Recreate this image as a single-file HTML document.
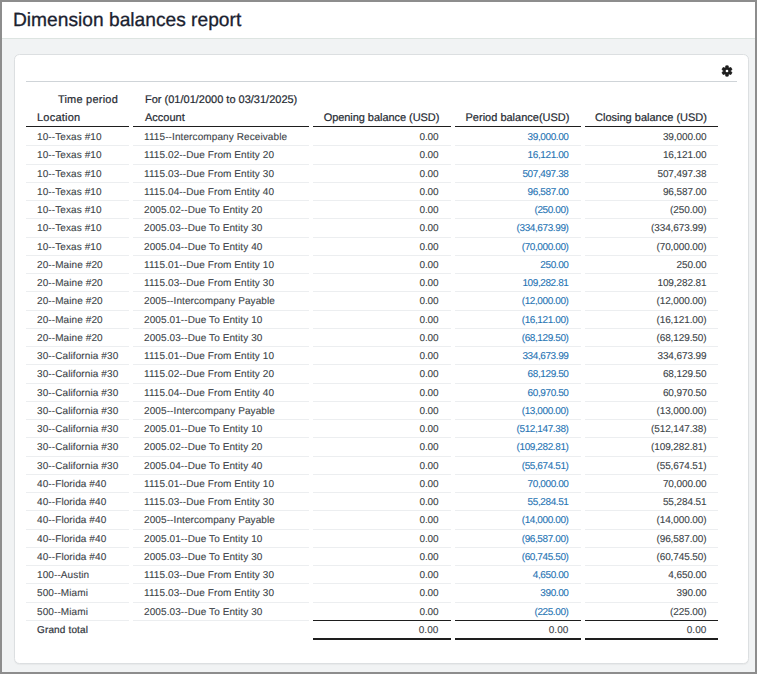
<!DOCTYPE html><html><head><meta charset="utf-8"><style>
*{margin:0;padding:0;box-sizing:border-box}
html,body{width:757px;height:674px;overflow:hidden;background:#8d8d8d;font-family:"Liberation Sans",sans-serif;text-rendering:geometricPrecision}
#frame{position:absolute;left:2px;top:2px;width:753px;height:670px;background:#f1f3f4;overflow:hidden}
#hdr{position:absolute;left:0;top:0;width:753px;height:37px;background:#fff;border-bottom:1px solid #dde4e1}
#title{position:absolute;left:11px;top:7.5px;font-size:19.2px;color:#1b2230;white-space:nowrap;-webkit-text-stroke:0.3px #1b2230}
#card{position:absolute;left:11.6px;top:52px;width:735.4px;height:610px;background:#fff;border:1px solid #dcdfe1;border-radius:5.5px;box-shadow:0 1px 1px rgba(0,0,0,0.04)}
.t{position:absolute;white-space:nowrap}
.h{font-size:11px;color:#262b33;-webkit-text-stroke:0.2px #262b33;letter-spacing:0px}
.b{font-size:10px;color:#3a3f46;-webkit-text-stroke:0.1px #3a3f46;letter-spacing:0.1px}
.n{letter-spacing:-0.1px}
.bl{letter-spacing:-0.4px;color:#2573b3;-webkit-text-stroke:0.1px #2573b3}
.g{-webkit-text-stroke:0.2px #3a3f46;color:#2c3038;letter-spacing:0.15px}
.r{text-align:right}
i{font-style:normal}
.po{margin-right:0px}
.pc{margin-left:0px}
.c{text-align:center}
.sep{position:absolute;height:1px;background:#eceef0}
.dk{position:absolute;background:#1e1e1e}
</style></head><body>
<div id="frame"><div id="hdr"><div id="title">Dimension balances report</div></div><div id="card"></div></div>
<div class="sep" style="left:26px;top:81px;width:711px;background:#cfd4d8"></div>
<svg style='position:absolute;left:721.3px;top:64.5px' width='12' height='12' viewBox='0 0 12 12'><path d='M4.42,2.76 L4.81,0.84 L7.19,0.84 L7.58,2.76 L8.01,3.02 L9.88,2.39 L11.07,4.45 L9.59,5.75 L9.59,6.25 L11.07,7.55 L9.88,9.61 L8.01,8.98 L7.58,9.24 L7.19,11.16 L4.81,11.16 L4.42,9.24 L3.99,8.98 L2.12,9.61 L0.93,7.55 L2.41,6.25 L2.41,5.75 L0.93,4.45 L2.12,2.39 L3.99,3.02Z' fill='#1e1e1e' stroke='#1e1e1e' stroke-width='0.7' stroke-linejoin='round'/><circle cx='6' cy='6' r='1.35' fill='#fff'/></svg>
<div class="t h r" style="left:-82px;width:200px;top:94px;letter-spacing:0.22px">Time period</div>
<div class="t h" style="left:145px;top:94px">For (01/01/2000 to 03/31/2025)</div>
<div class="t h" style="left:37px;top:112px;letter-spacing:0.22px">Location</div>
<div class="t h" style="left:145px;top:112px">Account</div>
<div class="t h c" style="left:312.5px;width:138.0px;top:112px;letter-spacing:-0.05px">Opening balance (USD)</div>
<div class="t h c" style="left:454.5px;width:126.0px;top:112px;letter-spacing:0px">Period balance(USD)</div>
<div class="t h c" style="left:584.5px;width:133.0px;top:112px;letter-spacing:0px">Closing balance (USD)</div>
<div class="dk" style="left:26px;width:103px;top:126px;height:1px"></div>
<div class="dk" style="left:133px;width:175.5px;top:126px;height:1px"></div>
<div class="dk" style="left:312.5px;width:138.0px;top:126px;height:1px"></div>
<div class="dk" style="left:454.5px;width:126.0px;top:126px;height:1px"></div>
<div class="dk" style="left:584.5px;width:133.0px;top:126px;height:1px"></div>
<div class="t b" style="left:37px;top:132.0px">10--Texas #10</div>
<div class="sep" style="left:26px;width:103px;top:145.25px"></div>
<div class="t b" style="left:144px;top:132.0px">1115--Intercompany Receivable</div>
<div class="sep" style="left:133px;width:175.5px;top:145.25px"></div>
<div class="t b r n" style="left:312.5px;width:126.0px;top:132.0px">0.00</div>
<div class="sep" style="left:312.5px;width:138.0px;top:145.25px"></div>
<div class="t b r n bl" style="left:454.5px;width:114.0px;top:132.0px">39,000.00</div>
<div class="sep" style="left:454.5px;width:126.0px;top:145.25px"></div>
<div class="t b r n" style="left:584.5px;width:122.0px;top:132.0px">39,000.00</div>
<div class="sep" style="left:584.5px;width:133.0px;top:145.25px"></div>
<div class="t b" style="left:37px;top:150.25px">10--Texas #10</div>
<div class="sep" style="left:26px;width:103px;top:163.5px"></div>
<div class="t b" style="left:144px;top:150.25px">1115.02--Due From Entity 20</div>
<div class="sep" style="left:133px;width:175.5px;top:163.5px"></div>
<div class="t b r n" style="left:312.5px;width:126.0px;top:150.25px">0.00</div>
<div class="sep" style="left:312.5px;width:138.0px;top:163.5px"></div>
<div class="t b r n bl" style="left:454.5px;width:114.0px;top:150.25px">16,121.00</div>
<div class="sep" style="left:454.5px;width:126.0px;top:163.5px"></div>
<div class="t b r n" style="left:584.5px;width:122.0px;top:150.25px">16,121.00</div>
<div class="sep" style="left:584.5px;width:133.0px;top:163.5px"></div>
<div class="t b" style="left:37px;top:168.5px">10--Texas #10</div>
<div class="sep" style="left:26px;width:103px;top:181.75px"></div>
<div class="t b" style="left:144px;top:168.5px">1115.03--Due From Entity 30</div>
<div class="sep" style="left:133px;width:175.5px;top:181.75px"></div>
<div class="t b r n" style="left:312.5px;width:126.0px;top:168.5px">0.00</div>
<div class="sep" style="left:312.5px;width:138.0px;top:181.75px"></div>
<div class="t b r n bl" style="left:454.5px;width:114.0px;top:168.5px">507,497.38</div>
<div class="sep" style="left:454.5px;width:126.0px;top:181.75px"></div>
<div class="t b r n" style="left:584.5px;width:122.0px;top:168.5px">507,497.38</div>
<div class="sep" style="left:584.5px;width:133.0px;top:181.75px"></div>
<div class="t b" style="left:37px;top:186.75px">10--Texas #10</div>
<div class="sep" style="left:26px;width:103px;top:200.0px"></div>
<div class="t b" style="left:144px;top:186.75px">1115.04--Due From Entity 40</div>
<div class="sep" style="left:133px;width:175.5px;top:200.0px"></div>
<div class="t b r n" style="left:312.5px;width:126.0px;top:186.75px">0.00</div>
<div class="sep" style="left:312.5px;width:138.0px;top:200.0px"></div>
<div class="t b r n bl" style="left:454.5px;width:114.0px;top:186.75px">96,587.00</div>
<div class="sep" style="left:454.5px;width:126.0px;top:200.0px"></div>
<div class="t b r n" style="left:584.5px;width:122.0px;top:186.75px">96,587.00</div>
<div class="sep" style="left:584.5px;width:133.0px;top:200.0px"></div>
<div class="t b" style="left:37px;top:205.0px">10--Texas #10</div>
<div class="sep" style="left:26px;width:103px;top:218.25px"></div>
<div class="t b" style="left:144px;top:205.0px">2005.02--Due To Entity 20</div>
<div class="sep" style="left:133px;width:175.5px;top:218.25px"></div>
<div class="t b r n" style="left:312.5px;width:126.0px;top:205.0px">0.00</div>
<div class="sep" style="left:312.5px;width:138.0px;top:218.25px"></div>
<div class="t b r n bl" style="left:454.5px;width:114.0px;top:205.0px"><i class="po">(</i>250.00<i class="pc">)</i></div>
<div class="sep" style="left:454.5px;width:126.0px;top:218.25px"></div>
<div class="t b r n" style="left:584.5px;width:122.0px;top:205.0px"><i class="po">(</i>250.00<i class="pc">)</i></div>
<div class="sep" style="left:584.5px;width:133.0px;top:218.25px"></div>
<div class="t b" style="left:37px;top:223.25px">10--Texas #10</div>
<div class="sep" style="left:26px;width:103px;top:236.5px"></div>
<div class="t b" style="left:144px;top:223.25px">2005.03--Due To Entity 30</div>
<div class="sep" style="left:133px;width:175.5px;top:236.5px"></div>
<div class="t b r n" style="left:312.5px;width:126.0px;top:223.25px">0.00</div>
<div class="sep" style="left:312.5px;width:138.0px;top:236.5px"></div>
<div class="t b r n bl" style="left:454.5px;width:114.0px;top:223.25px"><i class="po">(</i>334,673.99<i class="pc">)</i></div>
<div class="sep" style="left:454.5px;width:126.0px;top:236.5px"></div>
<div class="t b r n" style="left:584.5px;width:122.0px;top:223.25px"><i class="po">(</i>334,673.99<i class="pc">)</i></div>
<div class="sep" style="left:584.5px;width:133.0px;top:236.5px"></div>
<div class="t b" style="left:37px;top:241.5px">10--Texas #10</div>
<div class="sep" style="left:26px;width:103px;top:254.75px"></div>
<div class="t b" style="left:144px;top:241.5px">2005.04--Due To Entity 40</div>
<div class="sep" style="left:133px;width:175.5px;top:254.75px"></div>
<div class="t b r n" style="left:312.5px;width:126.0px;top:241.5px">0.00</div>
<div class="sep" style="left:312.5px;width:138.0px;top:254.75px"></div>
<div class="t b r n bl" style="left:454.5px;width:114.0px;top:241.5px"><i class="po">(</i>70,000.00<i class="pc">)</i></div>
<div class="sep" style="left:454.5px;width:126.0px;top:254.75px"></div>
<div class="t b r n" style="left:584.5px;width:122.0px;top:241.5px"><i class="po">(</i>70,000.00<i class="pc">)</i></div>
<div class="sep" style="left:584.5px;width:133.0px;top:254.75px"></div>
<div class="t b" style="left:37px;top:259.75px">20--Maine #20</div>
<div class="sep" style="left:26px;width:103px;top:273.0px"></div>
<div class="t b" style="left:144px;top:259.75px">1115.01--Due From Entity 10</div>
<div class="sep" style="left:133px;width:175.5px;top:273.0px"></div>
<div class="t b r n" style="left:312.5px;width:126.0px;top:259.75px">0.00</div>
<div class="sep" style="left:312.5px;width:138.0px;top:273.0px"></div>
<div class="t b r n bl" style="left:454.5px;width:114.0px;top:259.75px">250.00</div>
<div class="sep" style="left:454.5px;width:126.0px;top:273.0px"></div>
<div class="t b r n" style="left:584.5px;width:122.0px;top:259.75px">250.00</div>
<div class="sep" style="left:584.5px;width:133.0px;top:273.0px"></div>
<div class="t b" style="left:37px;top:278.0px">20--Maine #20</div>
<div class="sep" style="left:26px;width:103px;top:291.25px"></div>
<div class="t b" style="left:144px;top:278.0px">1115.03--Due From Entity 30</div>
<div class="sep" style="left:133px;width:175.5px;top:291.25px"></div>
<div class="t b r n" style="left:312.5px;width:126.0px;top:278.0px">0.00</div>
<div class="sep" style="left:312.5px;width:138.0px;top:291.25px"></div>
<div class="t b r n bl" style="left:454.5px;width:114.0px;top:278.0px">109,282.81</div>
<div class="sep" style="left:454.5px;width:126.0px;top:291.25px"></div>
<div class="t b r n" style="left:584.5px;width:122.0px;top:278.0px">109,282.81</div>
<div class="sep" style="left:584.5px;width:133.0px;top:291.25px"></div>
<div class="t b" style="left:37px;top:296.25px">20--Maine #20</div>
<div class="sep" style="left:26px;width:103px;top:309.5px"></div>
<div class="t b" style="left:144px;top:296.25px">2005--Intercompany Payable</div>
<div class="sep" style="left:133px;width:175.5px;top:309.5px"></div>
<div class="t b r n" style="left:312.5px;width:126.0px;top:296.25px">0.00</div>
<div class="sep" style="left:312.5px;width:138.0px;top:309.5px"></div>
<div class="t b r n bl" style="left:454.5px;width:114.0px;top:296.25px"><i class="po">(</i>12,000.00<i class="pc">)</i></div>
<div class="sep" style="left:454.5px;width:126.0px;top:309.5px"></div>
<div class="t b r n" style="left:584.5px;width:122.0px;top:296.25px"><i class="po">(</i>12,000.00<i class="pc">)</i></div>
<div class="sep" style="left:584.5px;width:133.0px;top:309.5px"></div>
<div class="t b" style="left:37px;top:314.5px">20--Maine #20</div>
<div class="sep" style="left:26px;width:103px;top:327.75px"></div>
<div class="t b" style="left:144px;top:314.5px">2005.01--Due To Entity 10</div>
<div class="sep" style="left:133px;width:175.5px;top:327.75px"></div>
<div class="t b r n" style="left:312.5px;width:126.0px;top:314.5px">0.00</div>
<div class="sep" style="left:312.5px;width:138.0px;top:327.75px"></div>
<div class="t b r n bl" style="left:454.5px;width:114.0px;top:314.5px"><i class="po">(</i>16,121.00<i class="pc">)</i></div>
<div class="sep" style="left:454.5px;width:126.0px;top:327.75px"></div>
<div class="t b r n" style="left:584.5px;width:122.0px;top:314.5px"><i class="po">(</i>16,121.00<i class="pc">)</i></div>
<div class="sep" style="left:584.5px;width:133.0px;top:327.75px"></div>
<div class="t b" style="left:37px;top:332.75px">20--Maine #20</div>
<div class="sep" style="left:26px;width:103px;top:346.0px"></div>
<div class="t b" style="left:144px;top:332.75px">2005.03--Due To Entity 30</div>
<div class="sep" style="left:133px;width:175.5px;top:346.0px"></div>
<div class="t b r n" style="left:312.5px;width:126.0px;top:332.75px">0.00</div>
<div class="sep" style="left:312.5px;width:138.0px;top:346.0px"></div>
<div class="t b r n bl" style="left:454.5px;width:114.0px;top:332.75px"><i class="po">(</i>68,129.50<i class="pc">)</i></div>
<div class="sep" style="left:454.5px;width:126.0px;top:346.0px"></div>
<div class="t b r n" style="left:584.5px;width:122.0px;top:332.75px"><i class="po">(</i>68,129.50<i class="pc">)</i></div>
<div class="sep" style="left:584.5px;width:133.0px;top:346.0px"></div>
<div class="t b" style="left:37px;top:351.0px">30--California #30</div>
<div class="sep" style="left:26px;width:103px;top:364.25px"></div>
<div class="t b" style="left:144px;top:351.0px">1115.01--Due From Entity 10</div>
<div class="sep" style="left:133px;width:175.5px;top:364.25px"></div>
<div class="t b r n" style="left:312.5px;width:126.0px;top:351.0px">0.00</div>
<div class="sep" style="left:312.5px;width:138.0px;top:364.25px"></div>
<div class="t b r n bl" style="left:454.5px;width:114.0px;top:351.0px">334,673.99</div>
<div class="sep" style="left:454.5px;width:126.0px;top:364.25px"></div>
<div class="t b r n" style="left:584.5px;width:122.0px;top:351.0px">334,673.99</div>
<div class="sep" style="left:584.5px;width:133.0px;top:364.25px"></div>
<div class="t b" style="left:37px;top:369.25px">30--California #30</div>
<div class="sep" style="left:26px;width:103px;top:382.5px"></div>
<div class="t b" style="left:144px;top:369.25px">1115.02--Due From Entity 20</div>
<div class="sep" style="left:133px;width:175.5px;top:382.5px"></div>
<div class="t b r n" style="left:312.5px;width:126.0px;top:369.25px">0.00</div>
<div class="sep" style="left:312.5px;width:138.0px;top:382.5px"></div>
<div class="t b r n bl" style="left:454.5px;width:114.0px;top:369.25px">68,129.50</div>
<div class="sep" style="left:454.5px;width:126.0px;top:382.5px"></div>
<div class="t b r n" style="left:584.5px;width:122.0px;top:369.25px">68,129.50</div>
<div class="sep" style="left:584.5px;width:133.0px;top:382.5px"></div>
<div class="t b" style="left:37px;top:387.5px">30--California #30</div>
<div class="sep" style="left:26px;width:103px;top:400.75px"></div>
<div class="t b" style="left:144px;top:387.5px">1115.04--Due From Entity 40</div>
<div class="sep" style="left:133px;width:175.5px;top:400.75px"></div>
<div class="t b r n" style="left:312.5px;width:126.0px;top:387.5px">0.00</div>
<div class="sep" style="left:312.5px;width:138.0px;top:400.75px"></div>
<div class="t b r n bl" style="left:454.5px;width:114.0px;top:387.5px">60,970.50</div>
<div class="sep" style="left:454.5px;width:126.0px;top:400.75px"></div>
<div class="t b r n" style="left:584.5px;width:122.0px;top:387.5px">60,970.50</div>
<div class="sep" style="left:584.5px;width:133.0px;top:400.75px"></div>
<div class="t b" style="left:37px;top:405.75px">30--California #30</div>
<div class="sep" style="left:26px;width:103px;top:419.0px"></div>
<div class="t b" style="left:144px;top:405.75px">2005--Intercompany Payable</div>
<div class="sep" style="left:133px;width:175.5px;top:419.0px"></div>
<div class="t b r n" style="left:312.5px;width:126.0px;top:405.75px">0.00</div>
<div class="sep" style="left:312.5px;width:138.0px;top:419.0px"></div>
<div class="t b r n bl" style="left:454.5px;width:114.0px;top:405.75px"><i class="po">(</i>13,000.00<i class="pc">)</i></div>
<div class="sep" style="left:454.5px;width:126.0px;top:419.0px"></div>
<div class="t b r n" style="left:584.5px;width:122.0px;top:405.75px"><i class="po">(</i>13,000.00<i class="pc">)</i></div>
<div class="sep" style="left:584.5px;width:133.0px;top:419.0px"></div>
<div class="t b" style="left:37px;top:424.0px">30--California #30</div>
<div class="sep" style="left:26px;width:103px;top:437.25px"></div>
<div class="t b" style="left:144px;top:424.0px">2005.01--Due To Entity 10</div>
<div class="sep" style="left:133px;width:175.5px;top:437.25px"></div>
<div class="t b r n" style="left:312.5px;width:126.0px;top:424.0px">0.00</div>
<div class="sep" style="left:312.5px;width:138.0px;top:437.25px"></div>
<div class="t b r n bl" style="left:454.5px;width:114.0px;top:424.0px"><i class="po">(</i>512,147.38<i class="pc">)</i></div>
<div class="sep" style="left:454.5px;width:126.0px;top:437.25px"></div>
<div class="t b r n" style="left:584.5px;width:122.0px;top:424.0px"><i class="po">(</i>512,147.38<i class="pc">)</i></div>
<div class="sep" style="left:584.5px;width:133.0px;top:437.25px"></div>
<div class="t b" style="left:37px;top:442.25px">30--California #30</div>
<div class="sep" style="left:26px;width:103px;top:455.5px"></div>
<div class="t b" style="left:144px;top:442.25px">2005.02--Due To Entity 20</div>
<div class="sep" style="left:133px;width:175.5px;top:455.5px"></div>
<div class="t b r n" style="left:312.5px;width:126.0px;top:442.25px">0.00</div>
<div class="sep" style="left:312.5px;width:138.0px;top:455.5px"></div>
<div class="t b r n bl" style="left:454.5px;width:114.0px;top:442.25px"><i class="po">(</i>109,282.81<i class="pc">)</i></div>
<div class="sep" style="left:454.5px;width:126.0px;top:455.5px"></div>
<div class="t b r n" style="left:584.5px;width:122.0px;top:442.25px"><i class="po">(</i>109,282.81<i class="pc">)</i></div>
<div class="sep" style="left:584.5px;width:133.0px;top:455.5px"></div>
<div class="t b" style="left:37px;top:460.5px">30--California #30</div>
<div class="sep" style="left:26px;width:103px;top:473.75px"></div>
<div class="t b" style="left:144px;top:460.5px">2005.04--Due To Entity 40</div>
<div class="sep" style="left:133px;width:175.5px;top:473.75px"></div>
<div class="t b r n" style="left:312.5px;width:126.0px;top:460.5px">0.00</div>
<div class="sep" style="left:312.5px;width:138.0px;top:473.75px"></div>
<div class="t b r n bl" style="left:454.5px;width:114.0px;top:460.5px"><i class="po">(</i>55,674.51<i class="pc">)</i></div>
<div class="sep" style="left:454.5px;width:126.0px;top:473.75px"></div>
<div class="t b r n" style="left:584.5px;width:122.0px;top:460.5px"><i class="po">(</i>55,674.51<i class="pc">)</i></div>
<div class="sep" style="left:584.5px;width:133.0px;top:473.75px"></div>
<div class="t b" style="left:37px;top:478.75px">40--Florida #40</div>
<div class="sep" style="left:26px;width:103px;top:492.0px"></div>
<div class="t b" style="left:144px;top:478.75px">1115.01--Due From Entity 10</div>
<div class="sep" style="left:133px;width:175.5px;top:492.0px"></div>
<div class="t b r n" style="left:312.5px;width:126.0px;top:478.75px">0.00</div>
<div class="sep" style="left:312.5px;width:138.0px;top:492.0px"></div>
<div class="t b r n bl" style="left:454.5px;width:114.0px;top:478.75px">70,000.00</div>
<div class="sep" style="left:454.5px;width:126.0px;top:492.0px"></div>
<div class="t b r n" style="left:584.5px;width:122.0px;top:478.75px">70,000.00</div>
<div class="sep" style="left:584.5px;width:133.0px;top:492.0px"></div>
<div class="t b" style="left:37px;top:497.0px">40--Florida #40</div>
<div class="sep" style="left:26px;width:103px;top:510.25px"></div>
<div class="t b" style="left:144px;top:497.0px">1115.03--Due From Entity 30</div>
<div class="sep" style="left:133px;width:175.5px;top:510.25px"></div>
<div class="t b r n" style="left:312.5px;width:126.0px;top:497.0px">0.00</div>
<div class="sep" style="left:312.5px;width:138.0px;top:510.25px"></div>
<div class="t b r n bl" style="left:454.5px;width:114.0px;top:497.0px">55,284.51</div>
<div class="sep" style="left:454.5px;width:126.0px;top:510.25px"></div>
<div class="t b r n" style="left:584.5px;width:122.0px;top:497.0px">55,284.51</div>
<div class="sep" style="left:584.5px;width:133.0px;top:510.25px"></div>
<div class="t b" style="left:37px;top:515.25px">40--Florida #40</div>
<div class="sep" style="left:26px;width:103px;top:528.5px"></div>
<div class="t b" style="left:144px;top:515.25px">2005--Intercompany Payable</div>
<div class="sep" style="left:133px;width:175.5px;top:528.5px"></div>
<div class="t b r n" style="left:312.5px;width:126.0px;top:515.25px">0.00</div>
<div class="sep" style="left:312.5px;width:138.0px;top:528.5px"></div>
<div class="t b r n bl" style="left:454.5px;width:114.0px;top:515.25px"><i class="po">(</i>14,000.00<i class="pc">)</i></div>
<div class="sep" style="left:454.5px;width:126.0px;top:528.5px"></div>
<div class="t b r n" style="left:584.5px;width:122.0px;top:515.25px"><i class="po">(</i>14,000.00<i class="pc">)</i></div>
<div class="sep" style="left:584.5px;width:133.0px;top:528.5px"></div>
<div class="t b" style="left:37px;top:533.5px">40--Florida #40</div>
<div class="sep" style="left:26px;width:103px;top:546.75px"></div>
<div class="t b" style="left:144px;top:533.5px">2005.01--Due To Entity 10</div>
<div class="sep" style="left:133px;width:175.5px;top:546.75px"></div>
<div class="t b r n" style="left:312.5px;width:126.0px;top:533.5px">0.00</div>
<div class="sep" style="left:312.5px;width:138.0px;top:546.75px"></div>
<div class="t b r n bl" style="left:454.5px;width:114.0px;top:533.5px"><i class="po">(</i>96,587.00<i class="pc">)</i></div>
<div class="sep" style="left:454.5px;width:126.0px;top:546.75px"></div>
<div class="t b r n" style="left:584.5px;width:122.0px;top:533.5px"><i class="po">(</i>96,587.00<i class="pc">)</i></div>
<div class="sep" style="left:584.5px;width:133.0px;top:546.75px"></div>
<div class="t b" style="left:37px;top:551.75px">40--Florida #40</div>
<div class="sep" style="left:26px;width:103px;top:565.0px"></div>
<div class="t b" style="left:144px;top:551.75px">2005.03--Due To Entity 30</div>
<div class="sep" style="left:133px;width:175.5px;top:565.0px"></div>
<div class="t b r n" style="left:312.5px;width:126.0px;top:551.75px">0.00</div>
<div class="sep" style="left:312.5px;width:138.0px;top:565.0px"></div>
<div class="t b r n bl" style="left:454.5px;width:114.0px;top:551.75px"><i class="po">(</i>60,745.50<i class="pc">)</i></div>
<div class="sep" style="left:454.5px;width:126.0px;top:565.0px"></div>
<div class="t b r n" style="left:584.5px;width:122.0px;top:551.75px"><i class="po">(</i>60,745.50<i class="pc">)</i></div>
<div class="sep" style="left:584.5px;width:133.0px;top:565.0px"></div>
<div class="t b" style="left:37px;top:570.0px">100--Austin</div>
<div class="sep" style="left:26px;width:103px;top:583.25px"></div>
<div class="t b" style="left:144px;top:570.0px">1115.03--Due From Entity 30</div>
<div class="sep" style="left:133px;width:175.5px;top:583.25px"></div>
<div class="t b r n" style="left:312.5px;width:126.0px;top:570.0px">0.00</div>
<div class="sep" style="left:312.5px;width:138.0px;top:583.25px"></div>
<div class="t b r n bl" style="left:454.5px;width:114.0px;top:570.0px">4,650.00</div>
<div class="sep" style="left:454.5px;width:126.0px;top:583.25px"></div>
<div class="t b r n" style="left:584.5px;width:122.0px;top:570.0px">4,650.00</div>
<div class="sep" style="left:584.5px;width:133.0px;top:583.25px"></div>
<div class="t b" style="left:37px;top:588.25px">500--Miami</div>
<div class="sep" style="left:26px;width:103px;top:601.5px"></div>
<div class="t b" style="left:144px;top:588.25px">1115.03--Due From Entity 30</div>
<div class="sep" style="left:133px;width:175.5px;top:601.5px"></div>
<div class="t b r n" style="left:312.5px;width:126.0px;top:588.25px">0.00</div>
<div class="sep" style="left:312.5px;width:138.0px;top:601.5px"></div>
<div class="t b r n bl" style="left:454.5px;width:114.0px;top:588.25px">390.00</div>
<div class="sep" style="left:454.5px;width:126.0px;top:601.5px"></div>
<div class="t b r n" style="left:584.5px;width:122.0px;top:588.25px">390.00</div>
<div class="sep" style="left:584.5px;width:133.0px;top:601.5px"></div>
<div class="t b" style="left:37px;top:606.5px">500--Miami</div>
<div class="sep" style="left:26px;width:103px;top:619.75px"></div>
<div class="t b" style="left:144px;top:606.5px">2005.03--Due To Entity 30</div>
<div class="sep" style="left:133px;width:175.5px;top:619.75px"></div>
<div class="t b r n" style="left:312.5px;width:126.0px;top:606.5px">0.00</div>
<div class="sep" style="left:312.5px;width:138.0px;top:619.75px"></div>
<div class="t b r n bl" style="left:454.5px;width:114.0px;top:606.5px"><i class="po">(</i>225.00<i class="pc">)</i></div>
<div class="sep" style="left:454.5px;width:126.0px;top:619.75px"></div>
<div class="t b r n" style="left:584.5px;width:122.0px;top:606.5px"><i class="po">(</i>225.00<i class="pc">)</i></div>
<div class="sep" style="left:584.5px;width:133.0px;top:619.75px"></div>
<div class="t b g" style="left:37px;top:624.75px">Grand total</div>
<div class="t b r" style="left:312.5px;width:126.0px;top:624.75px">0.00</div>
<div class="dk" style="left:312.5px;width:138.0px;top:619.75px;height:1px"></div>
<div class="dk" style="left:312.5px;width:138.0px;top:638.25px;height:2px"></div>
<div class="t b r" style="left:454.5px;width:114.0px;top:624.75px">0.00</div>
<div class="dk" style="left:454.5px;width:126.0px;top:619.75px;height:1px"></div>
<div class="dk" style="left:454.5px;width:126.0px;top:638.25px;height:2px"></div>
<div class="t b r" style="left:584.5px;width:122.0px;top:624.75px">0.00</div>
<div class="dk" style="left:584.5px;width:133.0px;top:619.75px;height:1px"></div>
<div class="dk" style="left:584.5px;width:133.0px;top:638.25px;height:2px"></div>
</body></html>
